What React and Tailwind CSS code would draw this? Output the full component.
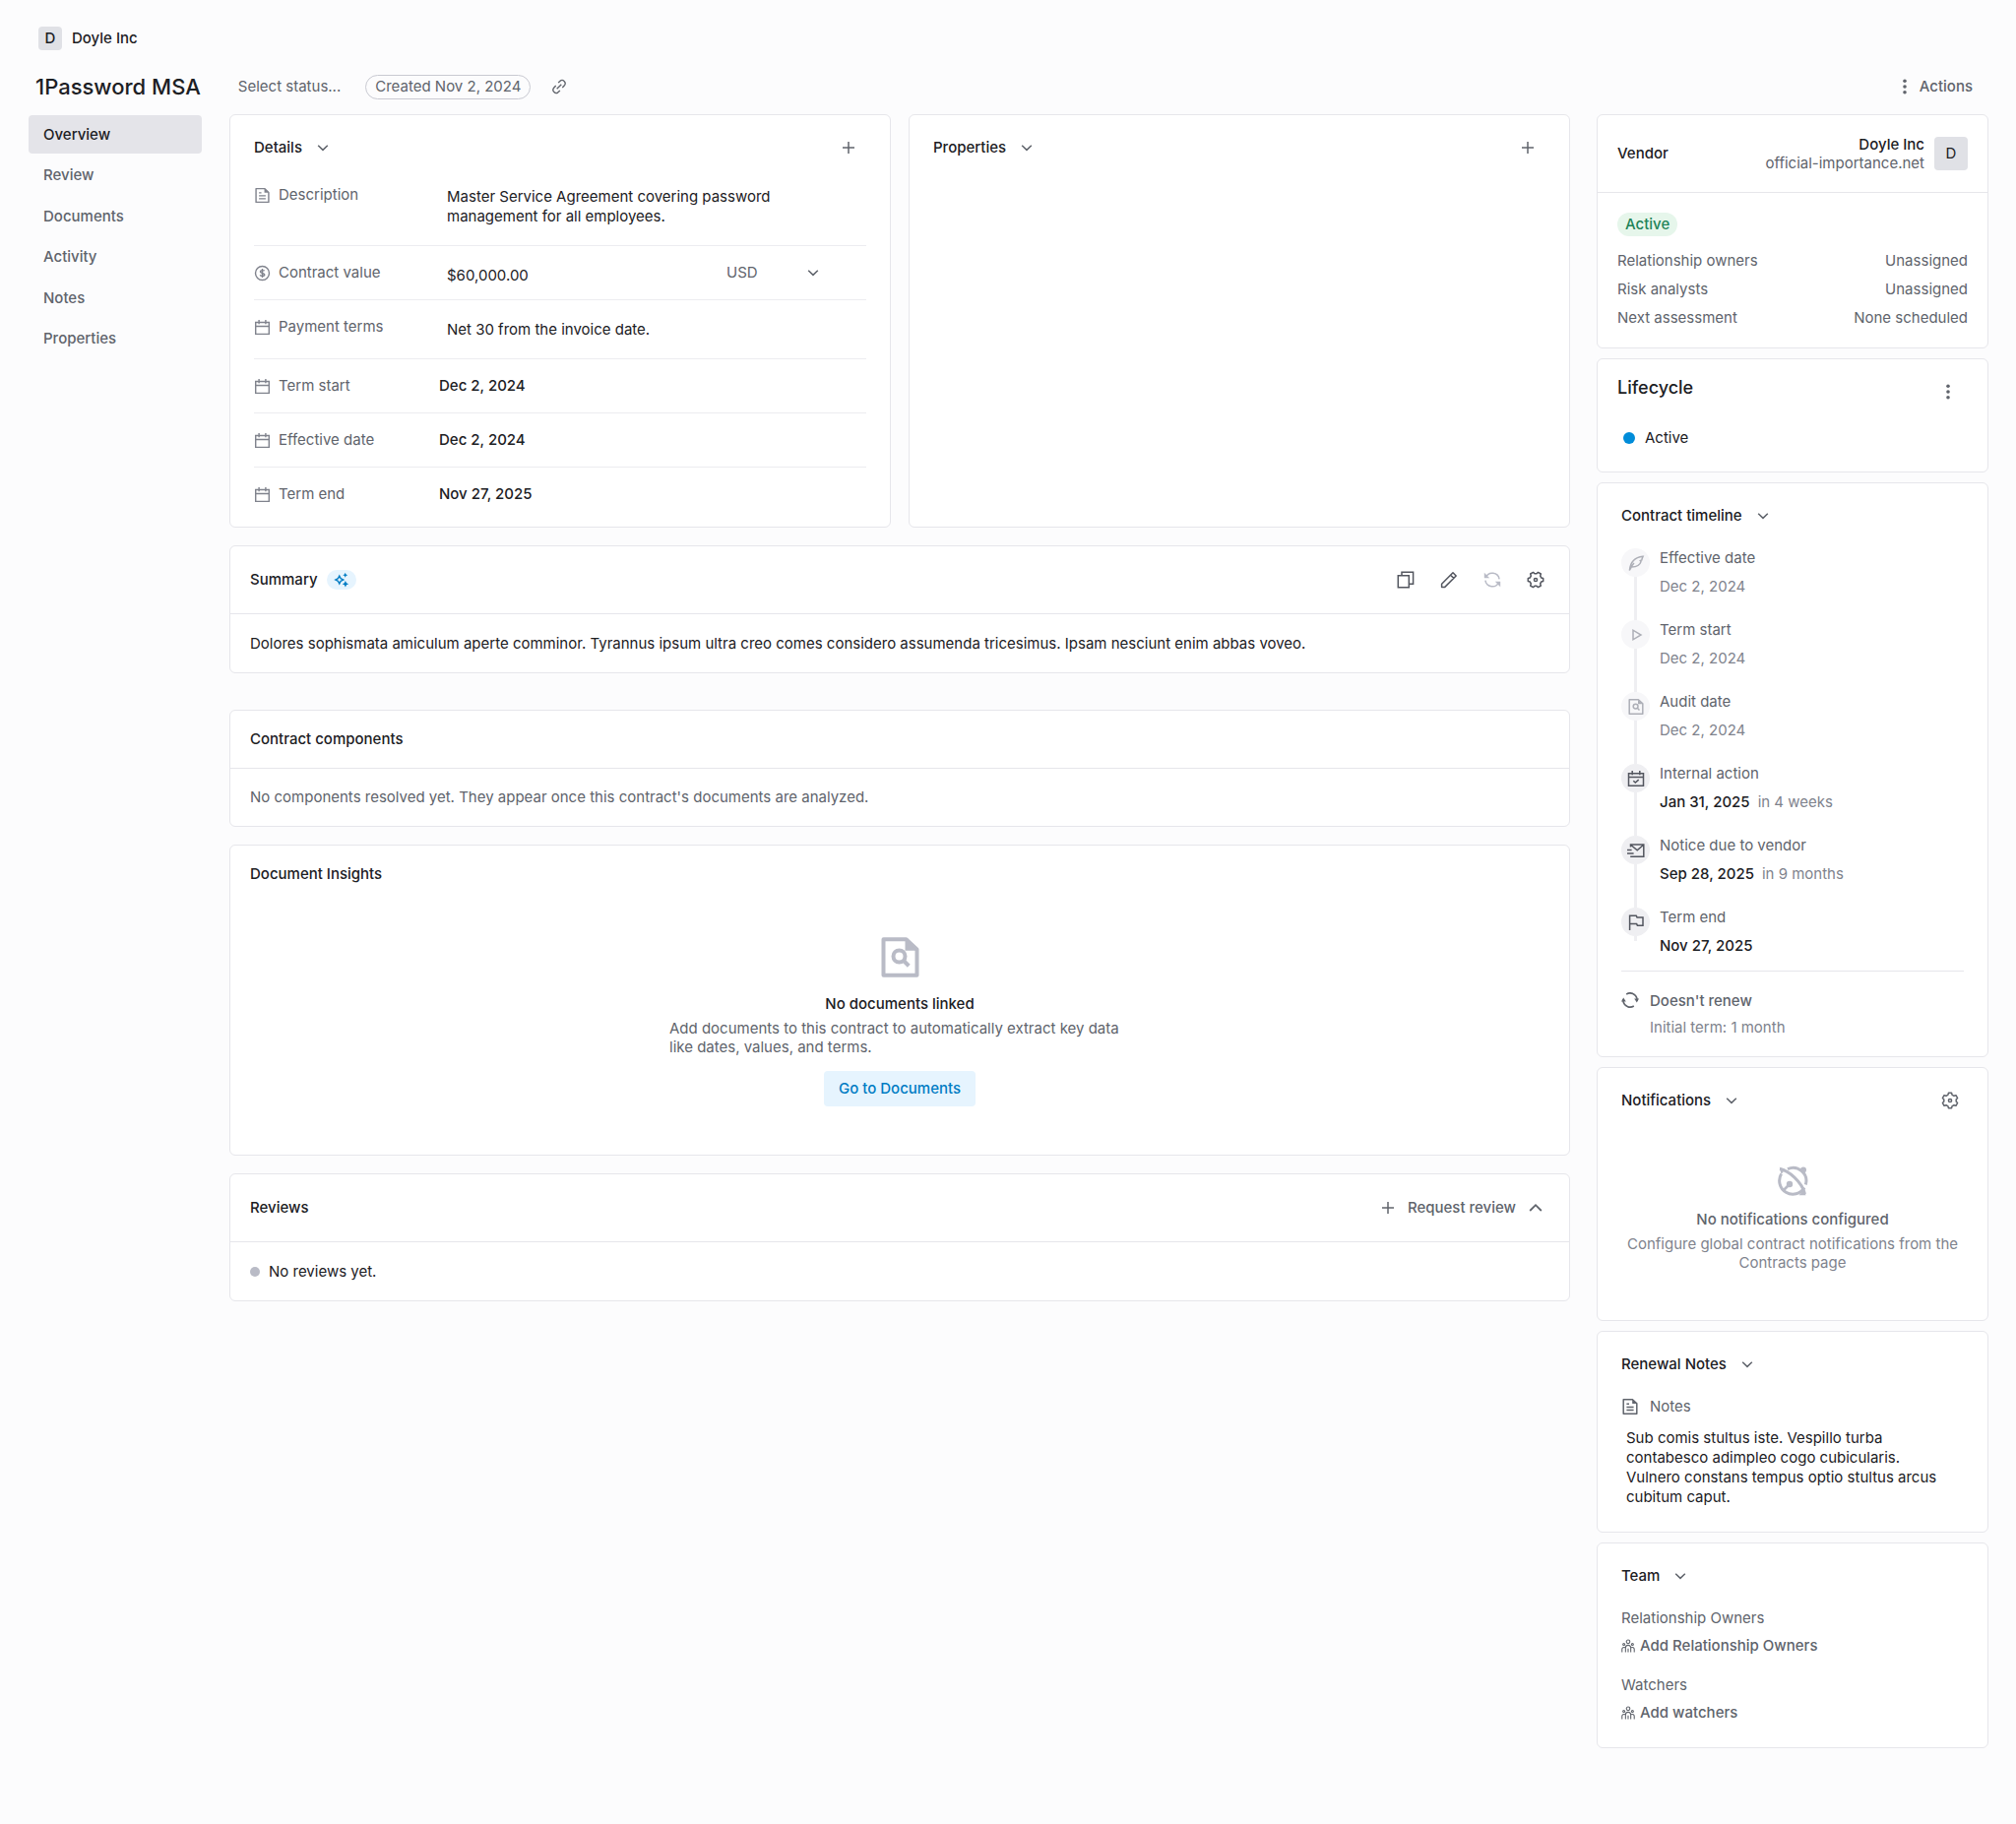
import React from "react";

function Icon({ size = 18, children, className = "", stroke = 1.5 }) {
  return (
    <svg
      width={size}
      height={size}
      viewBox="0 0 18 18"
      fill="none"
      stroke="currentColor"
      strokeWidth={stroke}
      className={"shrink-0 " + className}
      aria-hidden="true"
    >
      {children}
    </svg>
  );
}

const ChevronDown = ({ className = "text-[#60646c]" }) => (
  <Icon className={className}>
    <path d="M4.2 6.7 9 11.4l4.8-4.7" />
  </Icon>
);
const ChevronUp = () => (
  <Icon stroke={1.8}>
    <path d="M3.2 12 9 6.2l5.8 5.8" />
  </Icon>
);
const Plus = () => (
  <Icon>
    <path d="M9 3v12M3 9h12" />
  </Icon>
);
const Dots = () => (
  <Icon stroke={0}>
    <g fill="currentColor">
      <circle cx="9" cy="3.2" r="1.8" />
      <circle cx="9" cy="9" r="1.8" />
      <circle cx="9" cy="14.8" r="1.8" />
    </g>
  </Icon>
);
const DocText = ({ className, size }) => (
  <Icon className={className} size={size}>
    <path d="M2.2 1.7h9.2l4.4 4.1v10.5H2.2z" strokeLinejoin="round" />
    <path d="M11.2 1.7v4.4h4.6z" fill="currentColor" stroke="none" />
    <path d="M5.4 6.2H8M5.4 9.4h7.2M5.4 12.6h7.2" />
  </Icon>
);
const DocSearch = ({ size, stroke }) => (
  <Icon size={size} stroke={stroke}>
    <path d="M2.2 1.7h9.2l4.4 4.1v10.5H2.2z" strokeLinejoin="round" />
    <path d="M11 1.7v4.6h4.8z" fill="currentColor" stroke="none" />
    <circle cx="8.6" cy="8.6" r="2.4" />
    <path d="m10.3 10.3 2.2 2.2" />
  </Icon>
);
const Money = ({ className }) => (
  <Icon className={className}>
    <circle cx="9" cy="9" r="7.4" />
    <path d="M11.4 6.6c-.5-.8-4.6-1.2-4.6.7 0 2 4.6 1.3 4.6 3.3 0 2-4.2 1.6-4.900.5M9 4.2v9.6" />
  </Icon>
);
const Calendar = ({ className }) => (
  <Icon className={className}>
    <path d="M1.8 3.7h14.4v12.6H1.8zM1.8 8h14.4M5.4 1v4.6M12.6 1v4.6" />
  </Icon>
);
const CalendarCheck = () => (
  <Icon>
    <path d="M1.5 3.7h15v12.6h-15zM1.5 7.4h15M5.2 1v4.2M12.8 1v4.2M6.3 11.2l2 1.9 3.4-3" />
  </Icon>
);
const Feather = () => (
  <Icon>
    <path d="M2.4 16.6C3 9.5 6.5 3.3 16 2.3c-.8 1.6-1 2.4-1.2 3.7l-1.5.6.7 1C12.8 11.8 8.5 12.8 4.6 13M3 15.5c.6-2 2-4.5 4-6.5" />
  </Icon>
);
const Play = () => (
  <Icon>
    <path d="M6 4.200v9.600l8-4.800z" />
  </Icon>
);
const MailFast = () => (
  <Icon>
    <path d="M3.500 5.500V3h13.300v12.200H3.200M3.600 3.200l6.600 5.600 6.400-5.600M0 8.600h4.600M0 12h6.600" />
  </Icon>
);
const Flag = () => (
  <Icon>
    <path d="M2.600 17V2.200h6.600l.8 1.700h6v8.300h-5.600l-.8-1.600h-7" />
  </Icon>
);
const Refresh = ({ className }) => (
  <Icon className={className}>
    <path d="M2.400 6.500A7.200 7.200 0 0 1 16.100 8.300M15.600 11.500A7.200 7.200 0 0 1 1.900 9.700" />
    <path d="M.8 1.800v5.400h5.400zM17.200 16.200v-5.400h-5.400z" fill="currentColor" stroke="none" />
  </Icon>
);
const Renew = () => (
  <Icon>
    <path d="M5.200 3A7.200 7.200 0 0 1 16 7.500v2.600M12.800 15A7.200 7.200 0 0 1 2 10.500V7.900M6.300 15.800A7.200 7.200 0 0 0 12 15.600M11.700 2.200A7.200 7.200 0 0 0 6 2.400" />
    <path d="M0 10.400 2.200 6.600l2.600 3.800zM18 7.600l-2.200 3.800-2.600-3.800z" fill="currentColor" stroke="none" />
  </Icon>
);
const gearPath =
  "M7 3.200 7.400 1.300h3.200L11 3.200l1.900 1.100 2.100-.6 1.600 2.800L15.200 8v2l1.400 1.500-1.600 2.800-2.100-.6-1.900 1.100-.4 1.900H7.400L7 14.800l-1.900-1.100-2.100.6-1.600-2.800L2.800 10V8L1.400 6.500 3 3.700l2.100.6z";
const Gear = () => (
  <Icon>
    <path d={gearPath} strokeLinejoin="round" />
    <circle cx="9" cy="9" r="1.600" />
  </Icon>
);
const GearSide = () => (
  <Icon className="rotate-90">
    <path d={gearPath} strokeLinejoin="round" />
    <circle cx="9" cy="9" r="1.600" />
  </Icon>
);
const Copy = () => (
  <Icon>
    <path d="M1.300 4.800h11v12h-11zM5 4.500V1.300h11.600v12h-4" />
  </Icon>
);
const Pencil = () => (
  <Icon>
    <path d="M1.600 16.400v-3.200L13 1.800l3.200 3.200L4.800 16.400zM10.600 4.200l3.200 3.200" strokeLinejoin="round" />
  </Icon>
);
const LinkIcon = () => (
  <Icon size={16}>
    <path d="M8 4.500 10.300 2.400c3-2.400 7.200 1.600 5 4.900l-2.600 2.800M10 13.500l-2.300 2.100c-3 2.400-7.200-1.600-5-4.900l2.600-2.800M6.400 11.600l5.200-5.200" />
  </Icon>
);
const Sparkles = () => (
  <Icon size={16}>
    <path d="M6.500 4.500 8 7.500l3 1.500-3 1.500-1.500 3L5 10.500 2 9l3-1.500z" />
    <path
      d="m13.200.8.9 1.900 1.900.9-1.900.9-.9 1.900-.9-1.900-1.900-.9 1.900-.9zM13.400 10.200l1.200 2.400 2.400 1.200-2.400 1.200-1.200 2.400-1.200-2.400-2.400-1.200 2.400-1.200z"
      fill="currentColor"
      stroke="none"
    />
  </Icon>
);
const People = () => (
  <Icon size={14} stroke={1.400}>
    <circle cx="9" cy="3.600" r="2.300" />
    <circle cx="3.400" cy="7" r="1.300" />
    <circle cx="14.600" cy="7" r="1.300" />
    <path d="M5.600 17.500v-6c0-4.400 6.800-4.400 6.800 0v6M9 12.500v5M1 17.500v-4c0-2 2-3.200 4-2.400M17 17.500v-4c0-2-2-3.200-4-2.400" />
  </Icon>
);
const Planet = () => (
  <svg width="32" height="32" viewBox="0 0 32 32" fill="none" stroke="currentColor" strokeWidth="3" aria-hidden="true">
    <path d="M4.600 8.500A13.300 13.300 0 1 0 28 22.500M11 3.600A13.300 13.300 0 0 1 29.300 19.500" />
    <path d="M3 3.500C12 5 26 17 28.500 29" />
    <path d="M2.800 1.800 8.500 4 4.500 9zM29.500 30.200h-7l5-5.500z" fill="currentColor" stroke="none" />
    <circle cx="13" cy="19" r="3.200" fill="currentColor" stroke="none" />
    <path d="m12 20-5 5" strokeWidth="2.600" />
    <circle cx="27" cy="4.500" r="3" fill="currentColor" stroke="none" />
  </svg>
);

function Card({ className = "", children }) {
  return <section className={"rounded-md border border-[#e6e6eb] bg-white " + className}>{children}</section>;
}

function CardTitle({ children, action }) {
  return (
    <header className="flex h-6 items-center justify-between">
      <button type="button" className="flex items-center gap-3 font-medium text-[#1c2024]">
        {children}
        <ChevronDown />
      </button>
      {action}
    </header>
  );
}

const navItems = ["Overview", "Review", "Documents", "Activity", "Notes", "Properties"];

function Row({ icon: I, label, className, children }) {
  return (
    <div className={"flex items-start border-[#ececf0] " + className}>
      <div className="flex w-[188px] shrink-0 items-center gap-2 text-[#60646c]">
        <I className="size-[17px] text-[#80838d]" />
        {label}
      </div>
      {children}
    </div>
  );
}

function Details() {
  return (
    <Card className="px-6 pt-[21px] pb-[23px]">
      <CardTitle
        action={
          <button type="button" aria-label="Add detail" className="mr-[9px] text-[#60646c]">
            <Plus />
          </button>
        }
      >
        Details
      </CardTitle>
      <div className="mt-[15px]">
        <Row icon={DocText} label="Description" className="h-[73px] border-b pt-[11px]">
          <p className="w-[360px] pt-[2px] pl-2">
            Master Service Agreement covering password management for all employees.
          </p>
        </Row>
        <Row icon={Money} label="Contract value" className="h-[55px] border-b pt-[17px]">
          <input
            aria-label="Contract value"
            defaultValue="$60,000.00"
            className="mt-[3px] w-full min-w-0 flex-1 bg-transparent pl-2 outline-none"
          />
          <div className="relative mr-10 flex w-28 items-center">
            <select
              aria-label="Currency"
              defaultValue="USD"
              className="w-full appearance-none bg-transparent pl-[10px] text-[#60646c] outline-none"
            >
              <option>USD</option>
              <option>EUR</option>
            </select>
            <ChevronDown className="pointer-events-none absolute right-[5px] text-[#60646c]" />
          </div>
        </Row>
        <Row icon={Calendar} label="Payment terms" className="h-[60px] border-b pt-[17px]">
          <p className="pt-[3px] pl-2">Net 30 from the invoice date.</p>
        </Row>
        <Row icon={Calendar} label="Term start" className="h-[55px] border-b pt-[17px]">
          <button type="button" className="font-medium">Dec 2, 2024</button>
        </Row>
        <Row icon={Calendar} label="Effective date" className="h-[55px] border-b pt-[17px]">
          <button type="button" className="font-medium">Dec 2, 2024</button>
        </Row>
        <Row icon={Calendar} label="Term end" className="pt-[17px]">
          <button type="button" className="font-medium">Nov 27, 2025</button>
        </Row>
      </div>
    </Card>
  );
}

const timeline = [
  { label: "Effective date", date: "Dec 2, 2024", icon: Feather, past: true },
  { label: "Term start", date: "Dec 2, 2024", icon: Play, past: true },
  { label: "Audit date", date: "Dec 2, 2024", icon: DocSearch, past: true },
  { label: "Internal action", date: "Jan 31, 2025", rel: "in 4 weeks", icon: CalendarCheck },
  { label: "Notice due to vendor", date: "Sep 28, 2025", rel: "in 9 months", icon: MailFast },
  { label: "Term end", date: "Nov 27, 2025", icon: Flag, last: true },
];

function Timeline() {
  return (
    <Card className="px-6 pt-[21px] pb-[19px]">
      <CardTitle>Contract timeline</CardTitle>
      <ol className="mt-[21px]">
        {timeline.map(({ label, date, rel, icon: I, past, last }) => (
          <li key={label} className={"flex gap-[10px] " + (last ? "" : "h-[73px]")}>
            <div className="flex w-[29px] shrink-0 flex-col items-center">
              <span
                className={
                  "flex size-[29px] shrink-0 items-center justify-center rounded-full " +
                  (past ? "bg-[#f7f7f9] text-[#adafb7]" : "bg-[#efeff2] text-[#53565f]")
                }
              >
                <I />
              </span>
              <span className={"w-[3px] bg-[#efeff2] " + (last ? "h-[5px]" : "flex-1")} />
            </div>
            <div className="text-[#60646c]">
              <p>{label}</p>
              <p className="mt-[9px] flex gap-2">
                <span className={past ? "text-[#80838d]" : "font-medium text-[#1c2024]"}>{date}</span>
                {rel && <span className="text-[#80838d]">{rel}</span>}
              </p>
            </div>
          </li>
        ))}
      </ol>
      <div className="mt-[15px] flex gap-[11px] border-t border-[#e6e6eb] pt-5 text-[#60646c]">
        <Renew />
        <div>
          <p className="font-medium">Doesn't renew</p>
          <p className="mt-[7px] text-[#80838d]">Initial term: 1 month</p>
        </div>
      </div>
    </Card>
  );
}

export default function App() {
  return (
    <div className="min-h-screen bg-[#fcfcfd] pr-7 pb-[77px] pl-[29px] font-['Inter',sans-serif] text-[15px] leading-5 text-[#1c2024]">
      <div className="flex h-[78px] items-center pl-[10px]">
        <a href="#vendor" className="flex items-center gap-[10px] font-medium">
          <span className="flex size-6 items-center justify-center rounded bg-[#e0e1e6]">D</span>
          Doyle Inc
        </a>
      </div>
      <header className="-mt-[3px] flex h-[26px] items-center pl-[7px]">
        <h1 className="text-[22px] font-medium whitespace-nowrap">1Password MSA</h1>
        <button type="button" className="ml-[38px] text-[#60646c]">Select status...</button>
        <span className="ml-[25px] flex h-[25px] items-center rounded-full border border-[#c9cad2] px-[9px] text-[#60646c]">
          Created Nov 2, 2024
        </span>
        <button type="button" aria-label="Copy link" className="ml-[21px] text-[#60646c]">
          <LinkIcon />
        </button>
        <button type="button" className="mr-4 ml-auto flex items-center gap-[6px] font-medium text-[#60646c]">
          <Dots />
          Actions
        </button>
      </header>

      <div className="mt-[15px] flex items-start">
        <nav className="mr-7 flex h-[248px] w-44 shrink-0 flex-col justify-between pt-px">
          {navItems.map((n, i) => (
            <a
              key={n}
              href={"#" + n.toLowerCase()}
              className={
                "flex h-[39px] items-center rounded px-[15px] font-medium " +
                (i === 0 ? "bg-[#e4e4e9]" : "text-[#60646c]")
              }
            >
              {n}
            </a>
          ))}
        </nav>

        <main className="flex min-w-0 flex-1 flex-col gap-[18px]">
          <div className="grid grid-cols-2 gap-[18px]">
            <Details />
            <Card className="px-6 pt-[21px]">
              <CardTitle
                action={
                  <button type="button" aria-label="Add property" className="mr-[9px] text-[#60646c]">
                    <Plus />
                  </button>
                }
              >
                Properties
              </CardTitle>
            </Card>
          </div>

          <Card>
            <header className="flex h-[69px] items-center border-b border-[#e6e6eb] pr-[25px] pl-5">
              <h2 className="font-medium">Summary</h2>
              <span className="ml-[9px] flex h-5 w-[30px] items-center justify-center rounded-full bg-[#e6f4fe] text-[#007cc4]">
                <Sparkles />
              </span>
              <div className="ml-auto flex gap-[26px] text-[#53565f]">
                <button type="button" aria-label="Copy"><Copy /></button>
                <button type="button" aria-label="Edit"><Pencil /></button>
                <button type="button" aria-label="Regenerate" disabled className="text-[#b9bbc6]"><Refresh /></button>
                <button type="button" aria-label="Settings"><GearSide /></button>
              </div>
            </header>
            <p className="px-5 pt-5 pb-[19px]">
              Dolores sophismata amiculum aperte comminor. Tyrannus ipsum ultra creo comes considero assumenda tricesimus. Ipsam
              nesciunt enim abbas voveo.
            </p>
          </Card>

          <Card className="mt-[19px]">
            <h2 className="border-b border-[#e6e6eb] px-5 py-[19px] font-medium">Contract components</h2>
            <p className="px-5 py-[19px] text-[#60646c]">
              No components resolved yet. They appear once this contract's documents are analyzed.
            </p>
          </Card>

          <Card className="px-5 pt-[19px] pb-[49px]">
            <h2 className="font-medium">Document Insights</h2>
            <div className="mt-[52px] flex flex-col items-center">
              <span className="text-[#b9bbc6]"><DocSearch size={45} stroke={1.600} /></span>
              <p className="mt-[15px] font-medium">No documents linked</p>
              <p className="mt-[5px] w-[468px] leading-[19px] text-[#60646c]">
                Add documents to this contract to automatically extract key data like dates, values, and terms.
              </p>
              <button type="button" className="mt-[15px] rounded bg-[#e6f4fe] px-[15px] py-2 font-medium text-[#007cc4]">
                Go to Documents
              </button>
            </div>
          </Card>

          <Card>
            <header className="flex h-[69px] items-center border-b border-[#e6e6eb] pr-[25px] pl-5">
              <h2 className="font-medium">Reviews</h2>
              <div className="ml-auto flex items-center gap-[11px] text-[#60646c]">
                <button type="button" className="flex items-center gap-[11px] font-medium">
                  <Plus />
                  Request review
                </button>
                <button type="button" aria-label="Collapse reviews"><ChevronUp /></button>
              </div>
            </header>
            <p className="flex items-center gap-[9px] px-5 pt-5 pb-[19px]">
              <span className="size-[10px] rounded-full bg-[#b9bbc6]" />
              No reviews yet.
            </p>
          </Card>
        </main>

        <aside className="ml-[27px] flex w-[398px] shrink-0 flex-col gap-[10px]">
          <Card>
            <header className="flex h-[79px] items-center border-b border-[#e6e6eb] px-5">
              <h2 className="font-medium">Vendor</h2>
              <div className="ml-auto text-right leading-[19px]">
                <p className="font-medium">Doyle Inc</p>
                <p className="text-[#60646c]">official-importance.net</p>
              </div>
              <span className="ml-[10px] flex size-[34px] items-center justify-center rounded bg-[#e0e1e6]">D</span>
            </header>
            <div className="px-5 pt-5 pb-5 text-[#60646c]">
              <span className="inline-flex h-6 items-center rounded-full bg-[#e6f6eb] px-2 font-medium text-[#218358]">
                Active
              </span>
              <dl className="mt-[15px] flex flex-col gap-[9px]">
                {[
                  ["Relationship owners", "Unassigned"],
                  ["Risk analysts", "Unassigned"],
                  ["Next assessment", "None scheduled"],
                ].map(([k, v]) => (
                  <div key={k} className="flex justify-between">
                    <dt>{k}</dt>
                    <dd>{v}</dd>
                  </div>
                ))}
              </dl>
            </div>
          </Card>

          <Card className="pt-4 pr-[31px] pb-6 pl-5">
            <header className="flex items-center justify-between">
              <h2 className="text-[18px] leading-6 font-medium">Lifecycle</h2>
              <button type="button" aria-label="Lifecycle menu" className="pt-2 text-[#60646c]"><Dots /></button>
            </header>
            <p className="mt-[28px] flex items-center gap-[10px] pl-[6px]">
              <span className="size-3 rounded-full bg-[#008cd9]" />
              Active
            </p>
          </Card>

          <Timeline />

          <Card className="px-6 pt-[21px] pb-[49px]">
            <CardTitle
              action={
                <button type="button" aria-label="Notification settings" className="mr-[5px] text-[#60646c]"><Gear /></button>
              }
            >
              Notifications
            </CardTitle>
            <div className="mt-[54px] flex flex-col items-center text-center text-[#80838d]">
              <span className="text-[#b9bbc6]"><Planet /></span>
              <p className="mt-[13px] font-medium text-[#60646c]">No notifications configured</p>
              <p className="mt-[5px] leading-[19px]">Configure global contract notifications from the Contracts page</p>
            </div>
          </Card>

          <Card className="px-6 pt-[21px] pb-[25px]">
            <CardTitle>Renewal Notes</CardTitle>
            <p className="mt-[21px] flex items-center gap-[11px] text-[#60646c]">
              <DocText />
              Notes
            </p>
            <p className="mt-3 pr-4 pl-[5px]">
              Sub comis stultus iste. Vespillo turba contabesco adimpleo cogo cubicularis. Vulnero constans tempus optio
              stultus arcus cubitum caput.
            </p>
          </Card>

          <Card className="px-6 pt-[21px] pb-[25px] text-[#60646c]">
            <CardTitle>Team</CardTitle>
            <p className="mt-[21px]">Relationship Owners</p>
            <button type="button" className="mt-2 flex items-center gap-[5px] font-medium">
              <People />
              Add Relationship Owners
            </button>
            <p className="mt-5">Watchers</p>
            <button type="button" className="mt-2 flex items-center gap-[5px] font-medium">
              <People />
              Add watchers
            </button>
          </Card>
        </aside>
      </div>
    </div>
  );
}
